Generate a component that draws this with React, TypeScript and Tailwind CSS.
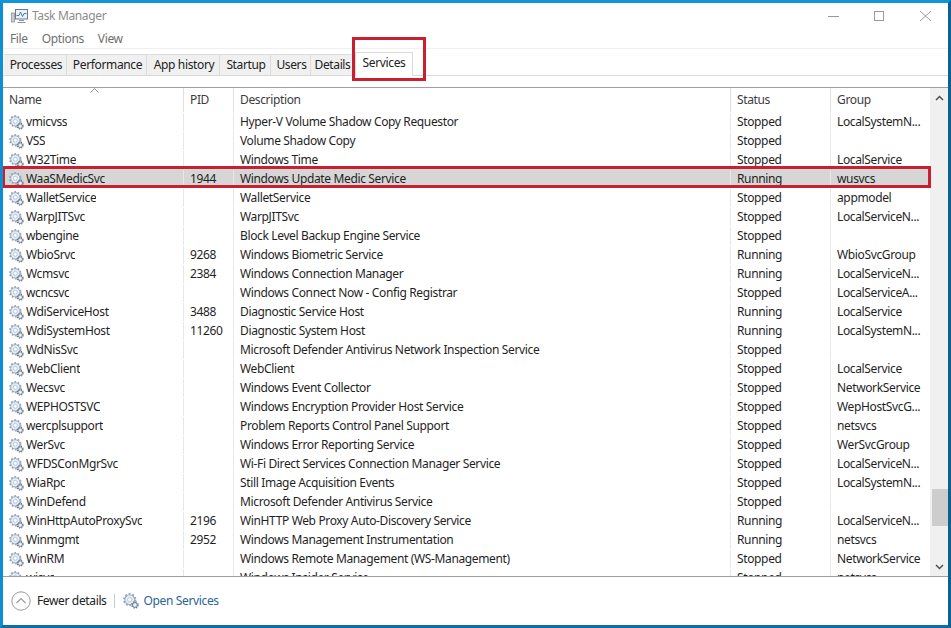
const SERVICES = [
  ['vmicvss', '', 'Hyper-V Volume Shadow Copy Requestor', 'Stopped', 'LocalSystemN...'],
  ['VSS', '', 'Volume Shadow Copy', 'Stopped', ''],
  ['W32Time', '', 'Windows Time', 'Stopped', 'LocalService'],
  ['WaaSMedicSvc', '1944', 'Windows Update Medic Service', 'Running', 'wusvcs'],
  ['WalletService', '', 'WalletService', 'Stopped', 'appmodel'],
  ['WarpJITSvc', '', 'WarpJITSvc', 'Stopped', 'LocalServiceN...'],
  ['wbengine', '', 'Block Level Backup Engine Service', 'Stopped', ''],
  ['WbioSrvc', '9268', 'Windows Biometric Service', 'Running', 'WbioSvcGroup'],
  ['Wcmsvc', '2384', 'Windows Connection Manager', 'Running', 'LocalServiceN...'],
  ['wcncsvc', '', 'Windows Connect Now - Config Registrar', 'Stopped', 'LocalServiceA...'],
  ['WdiServiceHost', '3488', 'Diagnostic Service Host', 'Running', 'LocalService'],
  ['WdiSystemHost', '11260', 'Diagnostic System Host', 'Running', 'LocalSystemN...'],
  ['WdNisSvc', '', 'Microsoft Defender Antivirus Network Inspection Service', 'Stopped', ''],
  ['WebClient', '', 'WebClient', 'Stopped', 'LocalService'],
  ['Wecsvc', '', 'Windows Event Collector', 'Stopped', 'NetworkService'],
  ['WEPHOSTSVC', '', 'Windows Encryption Provider Host Service', 'Stopped', 'WepHostSvcG...'],
  ['wercplsupport', '', 'Problem Reports Control Panel Support', 'Stopped', 'netsvcs'],
  ['WerSvc', '', 'Windows Error Reporting Service', 'Stopped', 'WerSvcGroup'],
  ['WFDSConMgrSvc', '', 'Wi-Fi Direct Services Connection Manager Service', 'Stopped', 'LocalServiceN...'],
  ['WiaRpc', '', 'Still Image Acquisition Events', 'Stopped', 'LocalSystemN...'],
  ['WinDefend', '', 'Microsoft Defender Antivirus Service', 'Stopped', ''],
  ['WinHttpAutoProxySvc', '2196', 'WinHTTP Web Proxy Auto-Discovery Service', 'Running', 'LocalServiceN...'],
  ['Winmgmt', '2952', 'Windows Management Instrumentation', 'Running', 'netsvcs'],
  ['WinRM', '', 'Windows Remote Management (WS-Management)', 'Stopped', 'NetworkService'],
  ['wisvc', '', 'Windows Insider Service', 'Stopped', 'netsvcs'],
]

const TABS = [
  { label: 'Processes', width: 'w-[63px]' },
  { label: 'Performance', width: 'w-[80px]' },
  { label: 'App history', width: 'w-[73px]' },
  { label: 'Startup', width: 'w-[51px]' },
  { label: 'Users', width: 'w-[40px]' },
  { label: 'Details', width: 'w-[42px]' },
]

function GearIcon({ className = 'w-[15px] h-[15px]' }: { className?: string }) {
  return (
    <svg viewBox="0 0 15 15" className={className}>
      <circle cx="6.3" cy="6.3" r="4.6" fill="#e8eef5" stroke="#9db0c4" strokeWidth="1" />
      <circle cx="6.3" cy="6.3" r="5.4" fill="none" stroke="#90a5bb" strokeWidth="1.6" strokeDasharray="1.7 1.7" />
      <circle cx="6.3" cy="6.3" r="2" fill="#fff" stroke="#a9bacb" strokeWidth="0.8" />
      <circle cx="11.2" cy="11.2" r="2.3" fill="#dfe5ea" stroke="#6f7f8e" strokeWidth="0.9" />
      <circle cx="11.2" cy="11.2" r="3" fill="none" stroke="#66778a" strokeWidth="1.1" strokeDasharray="1.2 1.2" />
      <circle cx="11.2" cy="11.2" r="0.8" fill="#fff" />
    </svg>
  )
}

function AppIcon() {
  return (
    <svg viewBox="0 0 17 16" className="h-[16px] w-[17px]">
      <rect x="0.5" y="5" width="3" height="9" fill="#c9ced3" stroke="#7d8791" strokeWidth="0.7" />
      <rect x="4.5" y="1.5" width="12" height="9.5" fill="#eaf1f7" stroke="#6d7a86" strokeWidth="1" />
      <path d="M5.5 7.5 L8 7.5 L9.5 4 L11.5 8.5 L13 5.5 L15.5 5.5" fill="none" stroke="#4c7fa8" strokeWidth="1" />
      <path d="M8 12.5 H13 M6.5 14.5 H14.5" stroke="#8b959e" strokeWidth="1.2" />
    </svg>
  )
}

function Row({ s, selected }: { s: string[]; selected: boolean }) {
  return (
    <div className={`flex h-[19px] shrink-0 items-center pt-[1px] text-[#1f1f1f] ${selected ? 'bg-[#d6d6d6]' : ''}`}>
      <div className="flex h-full w-[181px] items-center gap-[2px] border-r border-[#e8e8e8] pl-[6px]">
        <GearIcon />
        <span className="truncate">{s[0]}</span>
      </div>
      <div className="flex h-full w-[50px] items-center border-r border-[#e8e8e8] pl-[6px]">{s[1]}</div>
      <div className="flex h-full w-[497px] items-center border-r border-[#e8e8e8] pl-[6px]">{s[2]}</div>
      <div className="flex h-full w-[100px] items-center border-r border-[#e8e8e8] pl-[6px]">{s[3]}</div>
      <div className="flex h-full w-[99px] items-center pl-[6px]">{s[4]}</div>
    </div>
  )
}

export default function App() {
  return (
    <div className="relative flex h-[628px] w-[951px] flex-col overflow-hidden border-t-[3px] border-r-[3px] border-b-[3px] border-l-[3px] border-t-[#0f96d8] border-r-[#0e5f96] border-b-[#0e6ea6] border-l-[#0f8fd2] bg-white font-['Noto_Sans','Open_Sans',sans-serif] text-[12px] tracking-[-0.36px]">
      {/* title bar */}
      <div className="flex h-[26px] shrink-0 items-center pl-[8px]">
        <AppIcon />
        <span className="ml-[4px] text-[#8c8c8c]">Task Manager</span>
        <div className="ml-auto flex items-center">
          <svg viewBox="0 0 11 10" className="mr-[35px] h-[10px] w-[11px]"><path d="M0 5.5 H11" stroke="#999" /></svg>
          <svg viewBox="0 0 10 10" className="mr-[36px] h-[10px] w-[10px]"><rect x="0.5" y="0.5" width="9" height="9" fill="none" stroke="#999" /></svg>
          <svg viewBox="0 0 11 10" className="mr-[17px] h-[10px] w-[11px]"><path d="M0 0 L11 10 M11 0 L0 10" stroke="#999" /></svg>
        </div>
      </div>
      {/* menu */}
      <div className="flex h-[20px] shrink-0 items-center gap-[14px] border-b border-[#f0f0f0] pl-[7px] text-[#6f6f6f]">
        <span>File</span>
        <span>Options</span>
        <span>View</span>
      </div>
      {/* tabs */}
      <div className="flex h-[27px] shrink-0 items-start border-b border-[#d9d9d9] pt-[5px] pl-px">
        {TABS.map(t => (
          <div key={t.label} className={`flex h-[21px] items-center justify-center border-t border-r border-[#dcdcdc] bg-[#f0f0f0] pl-[2px] text-[#222] ${t.width}`}>{t.label}</div>
        ))}
        <div className="-mt-[2px] ml-[2px] flex h-[24px] w-[58px] items-center justify-center border-r border-t border-l border-[#d9d9d9] bg-white pb-[3px] text-[#222]">Services</div>
      </div>
      <div className="h-[12px] shrink-0 border-b border-[#a0a0a0]" />
      {/* table */}
      <div className="flex min-h-0 flex-1">
        <div className="flex min-h-0 w-[927px] flex-col overflow-hidden">
          <div className="relative flex h-[24px] shrink-0 items-center text-[#3c3c3c]">
            <div className="flex h-full w-[181px] items-center border-r border-[#e0e0e0] pl-[6px]">Name</div>
            <div className="flex h-full w-[50px] items-center border-r border-[#e0e0e0] pl-[6px]">PID</div>
            <div className="flex h-full w-[497px] items-center border-r border-[#e0e0e0] pl-[6px]">Description</div>
            <div className="flex h-full w-[100px] items-center border-r border-[#e0e0e0] pl-[6px]">Status</div>
            <div className="flex h-full w-[99px] items-center pl-[6px]">Group</div>
            <svg viewBox="0 0 9 5" className="absolute top-[0px] left-[87px] h-[5px] w-[9px]"><path d="M0.5 4.5 L4.5 0.5 L8.5 4.5" fill="none" stroke="#8a8a8a" /></svg>
          </div>
          {SERVICES.map(s => <Row key={s[0]} s={s} selected={s[0] === 'WaaSMedicSvc'} />)}
        </div>
        {/* scrollbar */}
        <div className="flex w-[18px] shrink-0 flex-col items-center bg-[#f0f0f0]">
          <svg viewBox="0 0 9 6" className="mt-[7px] h-[6px] w-[9px]"><path d="M1 5 L4.5 1.5 L8 5" fill="none" stroke="#505050" strokeWidth="1.5" /></svg>
          <div className="mt-[388px] ml-[2px] h-[37px] w-[16px] bg-[#cdcdcd]" />
          <svg viewBox="0 0 9 6" className="mt-[38px] h-[6px] w-[9px]"><path d="M1 1 L4.5 4.5 L8 1" fill="none" stroke="#505050" strokeWidth="1.5" /></svg>
        </div>
      </div>
      {/* footer */}
      <div className="flex h-[49px] shrink-0 items-center border-t border-[#a0a0a0] pl-[8px]">
        <svg viewBox="0 0 20 20" className="h-[20px] w-[20px]">
          <circle cx="10" cy="10" r="9.2" fill="none" stroke="#9a9a9a" />
          <path d="M5.5 12 L10 7.5 L14.5 12" fill="none" stroke="#9a9a9a" strokeWidth="1.2" />
        </svg>
        <span className="ml-[6px] text-[#222]">Fewer details</span>
        <div className="ml-[7px] h-[14px] w-px bg-[#c8c8c8]" />
        <GearIcon className="ml-[8px] h-[16px] w-[16px]" />
        <span className="ml-[5px] text-[#2a6496]">Open Services</span>
      </div>
      {/* red highlights */}
      <div className="absolute top-[34px] left-[349px] h-[44px] w-[74px] border-[3px] border-[#c8202f]" />
      <div className="absolute top-[163px] left-[-1px] h-[22px] w-[929px] border-[3px] border-[#c8202f]" />
    </div>
  )
}
